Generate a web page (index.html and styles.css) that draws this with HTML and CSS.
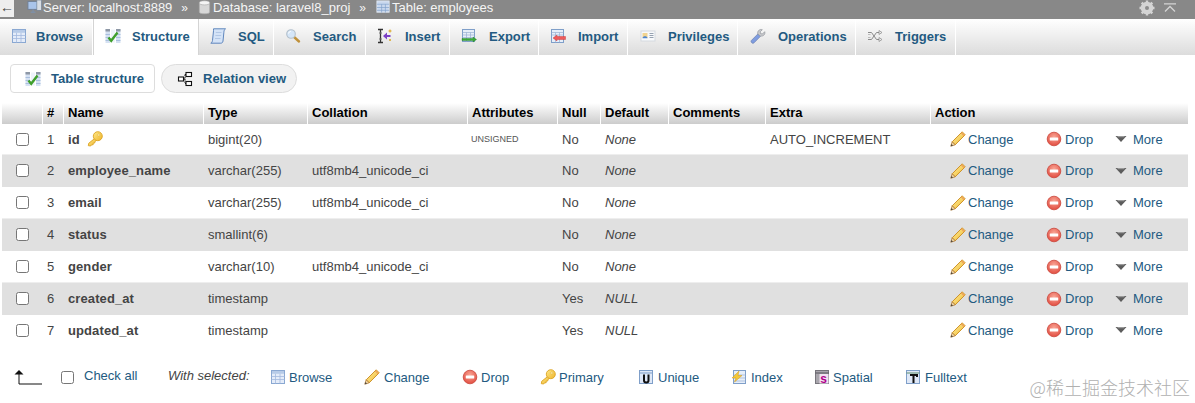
FILE: index.html
```html
<!DOCTYPE html>
<html lang="en">
<head>
<meta charset="utf-8">
<title>Table: employees</title>
<link rel="stylesheet" href="styles.css">
</head>
<body>
<svg class="defs" width="0" height="0" aria-hidden="true">
  <defs>
    <linearGradient id="gold" x1="0" y1="0" x2="1" y2="1"><stop offset="0" stop-color="#ffe98a"/><stop offset="1" stop-color="#eeb42a"/></linearGradient>
    <linearGradient id="pen" x1="0" y1="0" x2="1" y2="1"><stop offset="0" stop-color="#fff0a0"/><stop offset="1" stop-color="#f0b830"/></linearGradient>
    <radialGradient id="red" cx=".5" cy=".35" r=".7"><stop offset="0" stop-color="#f9a696"/><stop offset="1" stop-color="#e0463a"/></radialGradient>
    <symbol id="i-grid" viewBox="0 0 16 16"><rect x="1.500" y="1.500" width="13" height="13" fill="#e4ecf9" stroke="#8aa8d2"/><path d="M1.500 7.500h13M1.500 10.500h13M5.500 4.500v10M10 4.500v10" stroke="#a3bade" stroke-width=".8" fill="none"/><rect x="2" y="2" width="12" height="2.800" fill="#b7cbe8"/></symbol>
    <symbol id="i-struct" viewBox="0 0 16 16"><path d="M.5 1h4.500v14H.5zM11 1h4.500v14H11z" fill="#d5e1f2"/><path d="M.5 1h4.500v2.500H.5zM11 1h4.500v2.500H11z" fill="#8e98a6"/><path d="M.5 6.500h4.500M.5 9.500h4.500M.5 12.500h4.500M11 6.500h4.500M11 9.500h4.500M11 12.500h4.500" stroke="#9db6d8" stroke-width=".8"/><path d="M6 1.500h4v13H6z" fill="#eef3fa"/><path d="M3.500 9.500l2.700 3.300 6.300-8.300" fill="none" stroke="#3f9f2c" stroke-width="2.400"/></symbol>
    <symbol id="i-sql" viewBox="0 0 16 16"><path d="M3.500.8h12c-1.200.8-1.500 2-1.600 3.400l-.9 8.800c-.2 1.500-1 2.200-2.200 2.200H.8c1.100-.5 1.500-1.400 1.700-2.800L3.400 4C3.500 2.800 3.600 1.800 3.500.8z" fill="#d4e3f7" stroke="#5f86bd"/><path d="M5.800 4.500h5.700M5.400 7.500h5.700M5 10.500h5.500" stroke="#a9c0e0" stroke-width=".8"/></symbol>
    <symbol id="i-search" viewBox="0 0 16 16"><path d="M8.500 8.500l5.500 5" stroke="#c0913a" stroke-width="2.400" stroke-linecap="round"/><circle cx="6" cy="6" r="4.300" fill="#d5e6f8" stroke="#b3c0cc" stroke-width="1.100"/><path d="M3.500 5.500a2.700 2.700 0 0 1 2.300-2.200" stroke="#fff" fill="none"/></symbol>
    <symbol id="i-insert" viewBox="0 0 16 16"><path d="M1 1.500h5M1 14.500h5M3.500 1.500v13" stroke="#333" stroke-width="1.300" fill="none"/><path d="M2 5h3M2 11h3" stroke="#777"/><path d="M6 8l4-3.500V7h3.500v2H10v2.500z" fill="#7b3fc6"/><path d="M13 1.500v3M11.500 3h3" stroke="#d9a520"/><circle cx="13" cy="12" r="1" fill="#d9a520"/></symbol>
    <symbol id="i-export" viewBox="0 0 16 16"><rect x="1.500" y="1.500" width="12" height="12" fill="#e6eef9" stroke="#7f9fc9"/><path d="M1.500 4.500h12M1.500 7h12M1.500 9.500h12M5.500 4.500v9M9.500 4.500v9" stroke="#98b0d3" stroke-width=".7"/><path d="M1 10.500h11V9l3.500 2.500L12 14v-1.500H1z" fill="#39a93a" stroke="#1f7d22" stroke-width=".4"/></symbol>
    <symbol id="i-import" viewBox="0 0 16 16"><rect x="1.500" y="1.500" width="12" height="13" fill="#e6eef9" stroke="#7f9fc9"/><path d="M1.500 4.500h12M1.500 7h12M5.500 4.500v10M9.500 4.500v10" stroke="#98b0d3" stroke-width=".7"/><path d="M15.500 8.500H7V7l-4 3 4 3v-1.500h8.500z" fill="#ee5a5a" stroke="#c62a2a" stroke-width=".4"/></symbol>
    <symbol id="i-priv" viewBox="0 0 16 16"><rect x="1" y="3" width="14" height="10" fill="#f8f9fb" stroke="#d5dae0"/><rect x="2.500" y="5" width="5" height="5" fill="#f1d38f"/><path d="M2.500 10.200c.3-2.500 4.700-2.500 5 0z" fill="#4f86cf"/><path d="M9.500 5.500h4M9.500 7.500h4M9.500 9.500h4" stroke="#8a97a8" stroke-width=".9"/></symbol>
    <symbol id="i-ops" viewBox="0 0 16 16"><path d="M1.800 14.800c-1.100-1-.9-1.900-.3-2.500L7.800 6l2.500 2.500-6.200 6.300c-.7.600-1.500.8-2.300 0z" fill="#7f9de0" stroke="#6478a8" stroke-width=".6"/><path d="M7.800 6c-.4-1.800.2-3.200 1.500-4 1-.6 2.200-.7 3-.3L10.200 3.800l.4 1.800 1.800.4 2.300-2.300c.4 1 .2 2.200-.5 3.100-.9 1.100-2.400 1.500-3.900 1.200z" fill="#c9cbcf" stroke="#85888e" stroke-width=".6"/></symbol>
    <symbol id="i-trig" viewBox="0 0 16 16"><path d="M1 4.500h3.500l5 7H12M1 11.500h3.500l5-7H12" fill="none" stroke="#8a8a8a" stroke-width="1"/><path d="M1 6.500h2.500M1 9.500h2.500" stroke="#bbb"/><path d="M12 2.500l3 2-3 2zM12 9.500l3 2-3 2z" fill="#eee" stroke="#888" stroke-width=".7"/></symbol>
    <symbol id="i-rel" viewBox="0 0 16 16"><g fill="#fff" stroke="#111" stroke-width="1.100"><rect x="9" y="1.500" width="5.500" height="4"/><rect x="9" y="10.500" width="5.500" height="4"/><rect x="1.500" y="6" width="5" height="4"/></g><path d="M6.500 8h1.500M8 3.500v9M8 3.500h1M8 12.500h1" stroke="#111" fill="none" stroke-dasharray="1.500 .8"/></symbol>
    <symbol id="i-key" viewBox="0 0 16 16"><path d="M8.500 6.800L1.700 12.300l-.4 2.400 2.400.3 1-1.300 1.400.1.100-1.600 1.500-.2.300-1.500 2.200-1.700z" fill="url(#gold)" stroke="#dba425" stroke-width=".9"/><circle cx="10.800" cy="5.200" r="4.500" fill="url(#gold)" stroke="#dba425" stroke-width=".9"/><circle cx="11.800" cy="4" r="1.100" fill="#fff6c4" stroke="#e0ae35" stroke-width=".5"/></symbol>
    <symbol id="i-pencil" viewBox="0 0 16 16"><path d="M12.200.8l3 3-10 10-3-3z" fill="url(#pen)" stroke="#c98a1d" stroke-width=".9"/><path d="M2.200 10.800L.8 15.200l4.400-1.400z" fill="#f6dfae" stroke="#a9702a" stroke-width=".8"/><path d="M.8 15.200l.7-2.200 1.500 1.500z" fill="#444"/><path d="M11.300 1.700l3 3" stroke="#eea35a" stroke-width="1.500"/></symbol>
    <symbol id="i-drop" viewBox="0 0 16 16"><circle cx="8" cy="8" r="6.800" fill="url(#red)" stroke="#c9453a" stroke-width=".8"/><rect x="3.800" y="6.500" width="8.400" height="3" rx=".5" fill="#fff"/></symbol>
    <symbol id="i-more" viewBox="0 0 12 8"><path d="M.500 1h11L6 7z" fill="#5c5c5c"/><path d="M2.500 1.700h7" stroke="#aaa"/></symbol>
    <symbol id="i-unique" viewBox="0 0 16 16"><rect x="1.500" y="1.500" width="13" height="13" fill="#dfe8f7" stroke="#7f9fc9"/><path d="M1.500 4h13" stroke="#7f9fc9"/><path d="M6 5.500v6c0 2.500 4.500 2.500 4.500 0v-6" fill="none" stroke="#111" stroke-width="2"/></symbol>
    <symbol id="i-index" viewBox="0 0 16 16"><rect x="2.500" y="1.500" width="12" height="13" fill="#e6eef9" stroke="#7f9fc9"/><path d="M2.500 6h12M2.500 9h12M2.500 12h12" stroke="#98b0d3" stroke-width=".7"/><path d="M8 2L1 9h4l-1.500 4L11 6.500H7z" fill="#f1c83a" stroke="#d59a1c" stroke-width=".5"/></symbol>
    <symbol id="i-spatial" viewBox="0 0 16 16"><rect x="1.500" y="1.500" width="13" height="13" fill="#a9a6ad" stroke="#77757c"/><path d="M1.500 4h13" stroke="#55535a"/><rect x="5.500" y="5" width="9" height="9.500" fill="#f2e2f2"/><text class="glyph glyph-s" x="6.200" y="13.500">s</text></symbol>
    <symbol id="i-full" viewBox="0 0 16 16"><rect x="1.500" y="1.500" width="13" height="13" fill="#dfe8f7" stroke="#7f9fc9"/><path d="M1.500 4h13" stroke="#5f8f6f"/><path d="M5 6h7v2M8.500 6v8" fill="none" stroke="#111" stroke-width="2"/></symbol>
    <symbol id="i-server" viewBox="0 0 16 16"><rect x="1" y="1.500" width="11" height="8.500" fill="#a9c4ea" stroke="#6f7f95"/><path d="M4 13h5M6.500 10v3" stroke="#7f8fa5" stroke-width="1.500"/><rect x="10.500" y="0" width="5" height="11" fill="#d8dde3" stroke="#6f7f95" stroke-width=".7"/></symbol>
    <symbol id="i-db" viewBox="0 0 16 16"><path d="M2.500 3v10c0 2.300 11 2.300 11 0V3z" fill="#d7d7d7" stroke="#aaa" stroke-width=".7"/><ellipse cx="8" cy="3" rx="5.500" ry="2.200" fill="#f5f5f5" stroke="#aaa" stroke-width=".7"/></symbol>
    <symbol id="i-table" viewBox="0 0 16 16"><rect x="1" y="1" width="13" height="12" fill="#c9d8ee" stroke="#dfe7f2"/><path d="M1 4.500h13M1 8h13M1 11h13M6 4.500v9M10 4.500v9" stroke="#7f9fc9" stroke-width=".7"/></symbol>
    <symbol id="i-gear" viewBox="0 0 16 16"><circle cx="8" cy="8" r="4.600" fill="none" stroke="#d4d4d4" stroke-width="3.400"/><path d="M8 .5v15M.5 8h15M2.700 2.700l10.600 10.600M13.300 2.700L2.700 13.300" stroke="#d4d4d4" stroke-width="2.400"/><circle cx="8" cy="8" r="2" fill="#8c8c8c"/></symbol>
  </defs>
</svg>

<header class="topbar">
  <span class="back">&#8592;</span>
  <nav class="crumbs">
    <span class="crumb crumb-server"><svg class="ico"><use href="#i-server"/></svg>Server: localhost:8889</span>
    <span class="sep">»</span>
    <span class="crumb crumb-db"><svg class="ico"><use href="#i-db"/></svg>Database: laravel8_proj</span>
    <span class="sep">»</span>
    <span class="crumb crumb-table"><svg class="ico"><use href="#i-table"/></svg>Table: employees</span>
  </nav>
  <svg class="ico gear"><use href="#i-gear"/></svg>
  <svg class="collapse" viewBox="0 0 12 10"><path d="M0 .8h12M1 8.500l5-5 5 5" fill="none" stroke="#d4d4d4" stroke-width="1.300"/></svg>
</header>

<nav class="tabs">
  <a class="tab t-browse"><svg class="tab-ico"><use href="#i-grid"/></svg>Browse</a>
  <a class="tab t-structure active"><svg class="tab-ico"><use href="#i-struct"/></svg>Structure</a>
  <a class="tab t-sql"><svg class="tab-ico"><use href="#i-sql"/></svg>SQL</a>
  <a class="tab t-search"><svg class="tab-ico"><use href="#i-search"/></svg>Search</a>
  <a class="tab t-insert"><svg class="tab-ico"><use href="#i-insert"/></svg>Insert</a>
  <a class="tab t-export"><svg class="tab-ico"><use href="#i-export"/></svg>Export</a>
  <a class="tab t-import"><svg class="tab-ico"><use href="#i-import"/></svg>Import</a>
  <a class="tab t-priv"><svg class="tab-ico"><use href="#i-priv"/></svg>Privileges</a>
  <a class="tab t-ops"><svg class="tab-ico"><use href="#i-ops"/></svg>Operations</a>
  <a class="tab t-trig"><svg class="tab-ico"><use href="#i-trig"/></svg>Triggers</a>
</nav>

<div class="subtabs">
  <a class="subtab sub-active"><svg class="tab-ico"><use href="#i-struct"/></svg>Table structure</a>
  <a class="subtab sub-rel"><svg class="tab-ico"><use href="#i-rel"/></svg>Relation view</a>
</div>

<table class="cols">
  <colgroup>
    <col class="c-check"><col class="c-num"><col class="c-name"><col class="c-type"><col class="c-coll"><col class="c-attr"><col class="c-null"><col class="c-def"><col class="c-comm"><col class="c-extra"><col class="c-action">
  </colgroup>
  <thead>
    <tr><th></th><th>#</th><th>Name</th><th>Type</th><th>Collation</th><th>Attributes</th><th>Null</th><th>Default</th><th>Comments</th><th>Extra</th><th>Action</th></tr>
  </thead>
  <tbody>
    <tr class="r-odd"><td><span class="box"></span></td><td>1</td><td class="fname">id<svg class="ico key"><use href="#i-key"/></svg></td><td>bigint(20)</td><td></td><td class="attr">UNSIGNED</td><td>No</td><td class="em">None</td><td></td><td>AUTO_INCREMENT</td><td><div class="acts"><a class="act a-change"><svg class="ico"><use href="#i-pencil"/></svg>Change</a><a class="act a-drop"><svg class="ico"><use href="#i-drop"/></svg>Drop</a><a class="act a-more"><svg class="more"><use href="#i-more"/></svg>More</a></div></td></tr>
    <tr class="r-even"><td><span class="box"></span></td><td>2</td><td class="fname">employee_name</td><td>varchar(255)</td><td>utf8mb4_unicode_ci</td><td></td><td>No</td><td class="em">None</td><td></td><td></td><td><div class="acts"><a class="act a-change"><svg class="ico"><use href="#i-pencil"/></svg>Change</a><a class="act a-drop"><svg class="ico"><use href="#i-drop"/></svg>Drop</a><a class="act a-more"><svg class="more"><use href="#i-more"/></svg>More</a></div></td></tr>
    <tr class="r-odd"><td><span class="box"></span></td><td>3</td><td class="fname">email</td><td>varchar(255)</td><td>utf8mb4_unicode_ci</td><td></td><td>No</td><td class="em">None</td><td></td><td></td><td><div class="acts"><a class="act a-change"><svg class="ico"><use href="#i-pencil"/></svg>Change</a><a class="act a-drop"><svg class="ico"><use href="#i-drop"/></svg>Drop</a><a class="act a-more"><svg class="more"><use href="#i-more"/></svg>More</a></div></td></tr>
    <tr class="r-even"><td><span class="box"></span></td><td>4</td><td class="fname">status</td><td>smallint(6)</td><td></td><td></td><td>No</td><td class="em">None</td><td></td><td></td><td><div class="acts"><a class="act a-change"><svg class="ico"><use href="#i-pencil"/></svg>Change</a><a class="act a-drop"><svg class="ico"><use href="#i-drop"/></svg>Drop</a><a class="act a-more"><svg class="more"><use href="#i-more"/></svg>More</a></div></td></tr>
    <tr class="r-odd"><td><span class="box"></span></td><td>5</td><td class="fname">gender</td><td>varchar(10)</td><td>utf8mb4_unicode_ci</td><td></td><td>No</td><td class="em">None</td><td></td><td></td><td><div class="acts"><a class="act a-change"><svg class="ico"><use href="#i-pencil"/></svg>Change</a><a class="act a-drop"><svg class="ico"><use href="#i-drop"/></svg>Drop</a><a class="act a-more"><svg class="more"><use href="#i-more"/></svg>More</a></div></td></tr>
    <tr class="r-even"><td><span class="box"></span></td><td>6</td><td class="fname">created_at</td><td>timestamp</td><td></td><td></td><td>Yes</td><td class="em">NULL</td><td></td><td></td><td><div class="acts"><a class="act a-change"><svg class="ico"><use href="#i-pencil"/></svg>Change</a><a class="act a-drop"><svg class="ico"><use href="#i-drop"/></svg>Drop</a><a class="act a-more"><svg class="more"><use href="#i-more"/></svg>More</a></div></td></tr>
    <tr class="r-odd"><td><span class="box"></span></td><td>7</td><td class="fname">updated_at</td><td>timestamp</td><td></td><td></td><td>Yes</td><td class="em">NULL</td><td></td><td></td><td><div class="acts"><a class="act a-change"><svg class="ico"><use href="#i-pencil"/></svg>Change</a><a class="act a-drop"><svg class="ico"><use href="#i-drop"/></svg>Drop</a><a class="act a-more"><svg class="more"><use href="#i-more"/></svg>More</a></div></td></tr>
  </tbody>
</table>

<div class="bulk">
  <svg class="arrow" viewBox="0 0 28 16"><path d="M5 4v11h23" fill="none" stroke="#111" stroke-width="1"/><path d="M.500 5.500L5 1l4.500 4.500z" fill="#111"/></svg>
  <span class="box"></span>
  <a class="checkall">Check all</a>
  <span class="with">With selected:</span>
  <a class="bulk-act b-browse"><svg class="ico"><use href="#i-grid"/></svg>Browse</a>
  <a class="bulk-act b-change"><svg class="ico"><use href="#i-pencil"/></svg>Change</a>
  <a class="bulk-act b-drop"><svg class="ico"><use href="#i-drop"/></svg>Drop</a>
  <a class="bulk-act b-primary"><svg class="ico"><use href="#i-key"/></svg>Primary</a>
  <a class="bulk-act b-unique"><svg class="ico"><use href="#i-unique"/></svg>Unique</a>
  <a class="bulk-act b-index"><svg class="ico"><use href="#i-index"/></svg>Index</a>
  <a class="bulk-act b-spatial"><svg class="ico"><use href="#i-spatial"/></svg>Spatial</a>
  <a class="bulk-act b-full"><svg class="ico"><use href="#i-full"/></svg>Fulltext</a>
</div>

<div class="watermark">@稀土掘金技术社区</div>
</body>
</html>
```
FILE: styles.css
```css
* { box-sizing: border-box; }
html, body { margin: 0; padding: 0; }
body {
  width: 1195px;
  height: 403px;
  overflow: hidden;
  position: relative;
  background: #fff;
  font-family: "Liberation Sans", Arial, sans-serif;
  font-size: 13px;
  color: #444;
}
a { color: #235a81; text-decoration: none; }
.defs { display: block; height: 0; }
.glyph { font-family: "Liberation Sans", sans-serif; font-weight: 700; }
.glyph-s { font-size: 12px; fill: #b0008a; }
.ico { width: 16px; height: 16px; flex: none; }

/* top bar */
.topbar {
  height: 19px;
  padding-bottom: 4px;
  background: #888;
  color: #fff;
  display: flex;
  align-items: center;
  font-size: 13px;
}
.back {
  width: 14px;
  height: 17px;
  align-self: flex-start;
  background: #eee;
  color: #444;
  font-size: 14px;
  line-height: 14px;
}
.crumbs { display: flex; align-items: center; margin-left: 13px; flex: 1; color: #f5f5f5; }
.crumb { display: flex; align-items: center; }
.crumb .ico { width: 15px; height: 15px; margin-right: 1px; }
.sep { margin: 0 8px 0 9px; font-size: 12px; }
.crumb-db { margin-left: 1px; }
.crumb-table { margin-left: 2px; }
.gear { margin-right: 9px; }
.collapse { width: 12px; height: 10px; margin-right: 19px; }

/* tabs */
.tabs {
  height: 36px;
  display: flex;
  background: linear-gradient(#fff, #dcdcdc);
}
.tab {
  display: flex;
  align-items: center;
  height: 36px;
  padding-bottom: 2px;
  padding-left: 11px;
  font-weight: 700;
  color: #235a81;
  border-right: 1px solid #fff;
  white-space: nowrap;
}
.tab-ico { width: 16px; height: 16px; margin-right: 12px; flex: none; }
.tab.active { background: #fff; border-right: 1px solid #d4d4d4; border-left: 1px solid #d4d4d4; }
.t-browse { width: 93px; }
.t-browse .tab-ico { margin-right: 9px; }
.t-structure { width: 106px; }
.t-structure .tab-ico { margin-right: 11px; }
.t-sql { width: 75px; }
.t-search { width: 92px; }
.t-insert { width: 84px; }
.t-export { width: 89px; }
.t-import { width: 89px; }
.t-priv { width: 110px; padding-left: 12px; }
.t-ops { width: 118px; padding-left: 12px; }
.t-trig { width: 100px; }

/* sub tabs */
.subtabs { display: flex; gap: 6px; padding: 9px 0 0 10px; height: 48px; }
.subtab {
  height: 29px;
  display: flex;
  align-items: center;
  font-weight: 700;
  color: #235a81;
  padding-left: 14px;
  white-space: nowrap;
}
.subtab .tab-ico { margin-right: 10px; }
.sub-active { width: 145px; background: #fff; border: 1px solid #ddd; border-radius: 4px; }
.sub-rel { width: 136px; background: #f2f2f2; border: 1px solid #ddd; border-radius: 15px; padding-left: 15px; }

/* table */
.cols {
  margin-left: 2px;
  width: 1186px;
  table-layout: fixed;
  border-collapse: separate;
  border-spacing: 0;
}
.c-check { width: 41px; }
.c-num { width: 21px; }
.c-name { width: 140px; }
.c-type { width: 104px; }
.c-coll { width: 160px; }
.c-attr { width: 90px; }
.c-null { width: 43px; }
.c-def { width: 68px; }
.c-comm { width: 97px; }
.c-extra { width: 165px; }
.c-action { width: 257px; }
th {
  height: 21px;
  padding: 0 4px 2px;
  text-align: left;
  color: #000;
  font-weight: 700;
  background: linear-gradient(#fff, #ccc);
  border-right: 1px solid #fff;
  white-space: nowrap;
}
th:last-child { border-right: 0; }
td {
  padding: 0 4px;
  height: 32px;
  white-space: nowrap;
  border-bottom: 1px solid #eee;
}
tbody tr:first-child td { height: 31px; }
.r-even td { background: #e0e0e0; border-bottom-color: #e0e0e0; }
tbody tr:last-child td { border-bottom: 0; padding-bottom: 2px; }
.box {
  display: block;
  width: 13px;
  height: 13px;
  margin-left: 10px;
  background: #fff;
  border: 1px solid #767676;
  border-radius: 2.500px;
}
.fname { font-weight: 700; letter-spacing: .1px; }
.key { vertical-align: -3px; margin-left: 7px; }
.attr { font-size: 9px; padding-left: 3px; color: #555; }
.em { font-style: italic; }
.acts { display: flex; align-items: center; padding-left: 15px; }
.act { display: flex; align-items: center; gap: 2px; white-space: nowrap; }
.a-change { width: 96px; }
.a-drop { width: 69px; gap: 3px; }
.a-more { gap: 6px; }
.more { width: 12px; height: 8px; }

/* bulk actions */
.bulk { display: flex; align-items: center; height: 20px; margin-top: 20px; white-space: nowrap; }
.arrow { width: 28px; height: 16px; margin-left: 14px; flex: none; }
.bulk .box { margin-left: 19px; flex: none; }
.checkall { margin-left: 10px; width: 84px; margin-top: -3px; }
.with { font-style: italic; width: 102px; margin-top: -3px; }
.bulk-act { display: flex; align-items: center; gap: 4px; }
.b-browse { width: 94px; gap: 3px; }
.b-change { width: 98px; }
.b-drop { width: 78px; gap: 3px; }
.b-primary { width: 98px; gap: 3px; }
.b-unique { width: 93px; }
.b-index { width: 83px; }
.b-spatial { width: 91px; gap: 3px; }

.watermark {
  position: absolute;
  right: 5px;
  top: 375px;
  font-family: "Noto Sans CJK SC", sans-serif;
  font-size: 18px;
  font-weight: 300;
  line-height: 24px;
  color: #b0b0b0;
  white-space: nowrap;
}
```
